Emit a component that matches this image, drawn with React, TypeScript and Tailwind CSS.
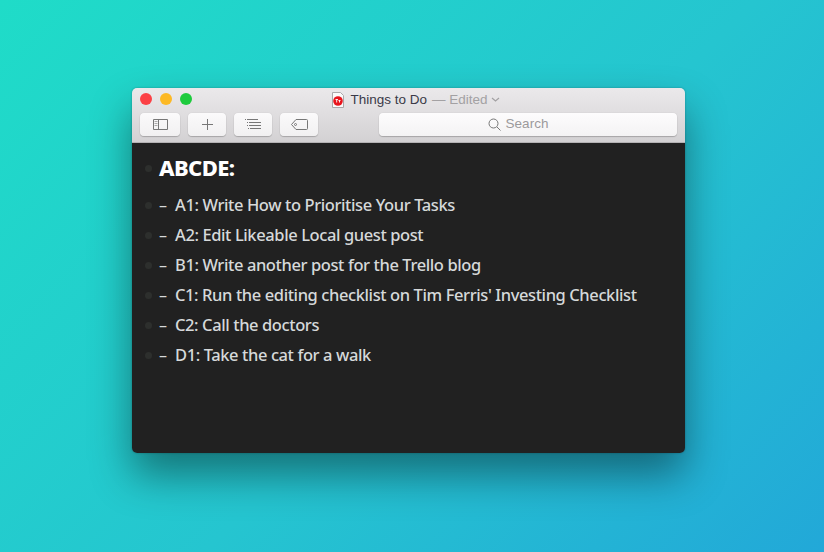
const items = [
  "A1: Write How to Prioritise Your Tasks",
  "A2: Edit Likeable Local guest post",
  "B1: Write another post for the Trello blog",
  "C1: Run the editing checklist on Tim Ferris' Investing Checklist",
  "C2: Call the doctors",
  "D1: Take the cat for a walk",
];

function ToolButton({ width, children }: { width: string; children: React.ReactNode }) {
  return (
    <div className={`flex h-[23px] items-center justify-center rounded-[4px] bg-gradient-to-b from-[#fbfafb] to-[#f1f0f1] shadow-[0_1px_1px_rgba(0,0,0,0.2),0_0_1px_rgba(0,0,0,0.2)] ${width}`}>
      {children}
    </div>
  );
}

export default function App() {
  return (
    <div className="h-[552px] w-[824px] overflow-hidden bg-[linear-gradient(135deg,#1fdcc8_0%,#25c5d0_55%,#22a8d8_100%)] pl-[132px] pt-[88px] font-['Liberation_Sans',sans-serif]">
      <div className="w-[553px] overflow-hidden rounded-[5px] shadow-[0_22px_42px_rgba(0,0,0,0.42),0_0_2px_rgba(0,0,0,0.3)]">
        <header className="h-[55px] border-b border-[#b4b2b4] bg-gradient-to-b from-[#ebe9eb] to-[#d3d1d3]">
          <div className="relative flex h-[23px] items-center justify-center pl-[15px] pt-[1px]">
            <div className="absolute left-[8px] top-[5px] flex gap-[8px]">
              <span className="h-[12px] w-[12px] rounded-full bg-[#fc4045]" />
              <span className="h-[12px] w-[12px] rounded-full bg-[#fdb924]" />
              <span className="h-[12px] w-[12px] rounded-full bg-[#1ecb3d]" />
            </div>
            <svg width="12" height="16" viewBox="0 0 12 16" className="mr-[6px]">
              <path d="M.5.5h8l3 3v12H.5z" fill="#fafafa" stroke="#aaa8aa" />
              <circle cx="6" cy="9" r="4.8" fill="#e8141c" />
              <path d="M3.5 7.5h2.5M4.7 7.5v3M6.5 8.5h2M7.5 8.5v2" stroke="#fff" strokeWidth="0.9" />
            </svg>
            <span className="text-[13.5px] text-[#3a3a48]">Things to Do</span>
            <span className="ml-[5px] text-[13.5px] text-[#a3a1a3]">— Edited</span>
            <svg width="9" height="6" viewBox="0 0 9 6" className="ml-[3px]" fill="none" stroke="#a3a1a3" strokeWidth="1.2">
              <path d="M1 1l3.5 3L8 1" />
            </svg>
          </div>
          <div className="flex items-center pl-[8px] pr-[8px] pt-[2px]">
            <div className="flex gap-[8px]">
              <ToolButton width="w-[40px]">
                <svg width="15" height="11" viewBox="0 0 15 11" fill="none" stroke="#777">
                  <path d="M.5.5h14v10H.5zM5.5.5v10" />
                  <path d="M1.5 2.5h3M1.5 4.5h3M1.5 6.5h3" stroke="#aaa" />
                </svg>
              </ToolButton>
              <ToolButton width="w-[38px]">
                <svg width="11" height="11" viewBox="0 0 11 11" stroke="#777">
                  <path d="M5.5 0v11M0 5.5h11" />
                </svg>
              </ToolButton>
              <ToolButton width="w-[38px]">
                <svg width="16" height="11" viewBox="0 0 16 11" stroke="#777">
                  <path d="M0 .5h1M2 .5h11M2 3.5h1M4 3.5h12M2 6.5h1M4 6.5h12M3 9.5h1M5 9.5h11" />
                </svg>
              </ToolButton>
              <ToolButton width="w-[38px]">
                <svg width="17" height="11" viewBox="0 0 17 11" fill="none" stroke="#777">
                  <path d="M5 .5h10.5a1 1 0 0 1 1 1v8a1 1 0 0 1-1 1H5L.5 5.5z" />
                  <circle cx="4.5" cy="5.5" r="1" />
                </svg>
              </ToolButton>
            </div>
            <div className="ml-[61px] flex h-[23px] flex-1 items-center justify-center gap-[5px] rounded-[4px] bg-gradient-to-b from-[#fdfcfd] to-[#f4f3f4] pr-[20px] shadow-[0_1px_1px_rgba(0,0,0,0.2),0_0_1px_rgba(0,0,0,0.2)]">
              <svg width="13" height="13" viewBox="0 0 13 13" fill="none" stroke="#777">
                <circle cx="5.5" cy="5.5" r="4.5" />
                <path d="M9 9l3.5 3.5" />
              </svg>
              <span className="text-[13.5px] text-[#9c9a9c]">Search</span>
            </div>
          </div>
        </header>
        <main className="h-[310px] bg-[#212121] pl-[13px] pt-[9px] font-['Noto_Sans',sans-serif]">
          <div className="flex h-[33px] items-center">
            <span className="h-[7px] w-[7px] rounded-full bg-[#2d2f2d]" />
            <h1 className="ml-[7px] -translate-y-[1px] text-[22px] font-extrabold tracking-[-0.6px] text-white">ABCDE:</h1>
          </div>
          <ul className="mt-[5px]">
            {items.map((item) => (
              <li key={item} className="flex h-[30px] items-center">
                <span className="h-[7px] w-[7px] rounded-full bg-[#2d2f2d]" />
                <span className="ml-[7px] w-[16px] text-[16px] text-[#d6d9da]">–</span>
                <span className="text-[16.5px] font-medium tracking-[-0.4px] text-[#d6d9da]">{item}</span>
              </li>
            ))}
          </ul>
        </main>
      </div>
    </div>
  );
}
